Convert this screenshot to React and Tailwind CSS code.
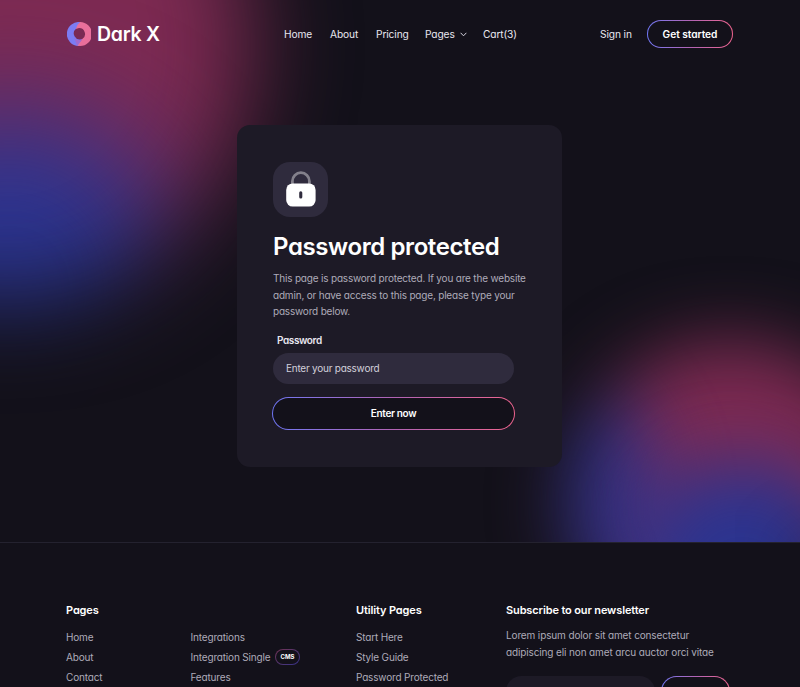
import React from "react";

function Glows() {
  return (
    <svg className="absolute inset-0" width="800" height="542" viewBox="0 0 800 542" aria-hidden="true">
      <defs>
        <filter id="edgeWide" x="-60%" y="-60%" width="220%" height="220%" colorInterpolationFilters="sRGB"><feGaussianBlur stdDeviation="48" /></filter>
        <filter id="hueWide" x="-100%" y="-100%" width="300%" height="300%" colorInterpolationFilters="sRGB"><feGaussianBlur stdDeviation="56" /></filter>
        <filter id="soft" x="-100%" y="-100%" width="300%" height="300%" colorInterpolationFilters="sRGB"><feGaussianBlur stdDeviation="36" /></filter>
        <mask id="leftMask" maskUnits="userSpaceOnUse" x="-400" y="-400" width="1000" height="1000">
          <ellipse cx="6" cy="46" rx="246" ry="256" fill="#fff" filter="url(#edgeWide)" />
        </mask>
        <mask id="rightMask" maskUnits="userSpaceOnUse" x="400" y="200" width="600" height="600">
          <circle cx="730" cy="502" r="162" fill="#fff" filter="url(#soft)" />
        </mask>
      </defs>
      <g mask="url(#leftMask)">
        <rect x="0" y="0" width="450" height="500" fill="#7d2a52" />
        <ellipse cx="10" cy="290" rx="175" ry="180" fill="#2b3490" filter="url(#hueWide)" />
      </g>
      <g mask="url(#rightMask)">
        <rect x="450" y="200" width="350" height="342" fill="#7d2a52" />
        <ellipse cx="575" cy="510" rx="88" ry="135" fill="#2b3490" opacity="0.85" filter="url(#soft)" />
        <ellipse cx="742" cy="568" rx="112" ry="106" fill="#2b3490" filter="url(#soft)" />
        <circle cx="825" cy="570" r="30" fill="#15142a" opacity="0.7" filter="url(#soft)" />
      </g>
    </svg>
  );
}

function Logo() {
  return (
    <div className="flex w-[217px] items-center gap-[6px]">
      <svg width="24" height="24" viewBox="0 0 24 24">
        <path d="M14 0.2A12 12 0 1 0 12 24L15 17A6 6 0 0 1 9 6.8Z" fill="#7b7cf3" />
        <path d="M13 0A12 12 0 0 1 13 24L10.5 23.8L15 17.2A6 6 0 0 0 12 6L8.8 6.9Q10 2.6 13 0Z" fill="#e96f9b" />
        <path d="M10 23.8L15.5 17A6 6 0 0 1 7 15.5Q9 20 10 23.8Z" fill="#a06bd0" />
      </svg>
      <span className="text-[19.5px] leading-6 font-semibold tracking-[-0.28px] whitespace-nowrap text-white">Dark X</span>
    </div>
  );
}

const outline = "bg-gradient-to-r from-[#6f76f5] via-[#b163b4] to-[#f0648f]";

function Header() {
  return (
    <header className="flex h-[68px] items-center pl-[67px] text-[10.2px] tracking-[-0.12px] text-[#e9e7f0]">
      <Logo />
      <nav className="flex items-center pt-px whitespace-nowrap">
        <a className="w-[46px]">Home</a>
        <a className="w-[46px]">About</a>
        <a className="w-[49px]">Pricing</a>
        <a className="flex w-[58px] items-center gap-[5px]">
          Pages
          <svg width="7" height="5" viewBox="0 0 7 5" fill="none" stroke="#d5d3df" strokeWidth="1"><path d="M0.6 0.8L3.5 3.8L6.4 0.8" /></svg>
        </a>
        <a className="w-[117px]">Cart(3)</a>
        <a className="w-[47px]">Sign in</a>
      </nav>
      <div className={"h-[28px] w-[86px] rounded-full p-px " + outline}>
        <button className="flex h-full w-full items-center justify-center rounded-full bg-[#13111a] pt-px text-[10.2px] font-semibold tracking-[-0.05px] whitespace-nowrap text-white">Get started</button>
      </div>
    </header>
  );
}

function Card() {
  return (
    <main className="mt-[56.5px] ml-[237px] h-[342px] w-[325px] rounded-[13px] bg-[#1d1a26] pt-[37px] pl-9">
      <div className="flex size-[55px] items-center justify-center rounded-[17px] bg-[#2f2b3d]">
        <svg width="30" height="36" viewBox="0 0 30 36">
          <path d="M6.4 14V10.2a8.5 8.5 0 0 1 17 0V14" fill="none" stroke="#83808b" strokeWidth="2.8" />
          <rect x="0.2" y="12.5" width="29.4" height="23" rx="6.4" fill="#fff" />
          <rect x="13.2" y="20.3" width="3.1" height="7.2" rx="1.5" fill="#2f2b3d" />
        </svg>
      </div>
      <h1 className="mt-[14px] text-[24px] leading-8 font-semibold tracking-[-0.4px] whitespace-nowrap text-white">Password protected</h1>
      <p className="mt-[7.5px] text-[10px] leading-[16.7px] tracking-[-0.19px] whitespace-nowrap text-[#aeabb9]">
        This page is password protected. If you are the website<br />
        admin, or have access to this page, please type your<br />
        password below.
      </p>
      <label className="mt-[11.4px] ml-1 block text-[10px] leading-4 font-semibold tracking-[-0.4px] text-[#e9e7f0]">Password</label>
      <div className="mt-[5px] flex h-[31px] w-[241px] items-center rounded-full bg-[#2f2b3d] pt-px pl-[13px] text-[10px] tracking-[-0.24px] text-[#d2d0db]">Enter your password</div>
      <div className={"mt-[13px] -ml-px h-[33px] w-[243px] rounded-full p-px " + outline}>
        <button className="flex h-full w-full items-center justify-center rounded-full bg-[#13111a] text-[10px] font-semibold tracking-[-0.34px] text-white">Enter now</button>
      </div>
    </main>
  );
}

function Links({ items }) {
  return (
    <ul className="text-[10px] leading-5 tracking-[-0.17px] whitespace-nowrap text-[#aeabb9]">
      {items.map((item) => (
        <li key={item} className="flex h-5 items-center gap-[4.5px]">
          <span>{item}</span>
          {item === "Integration Single" && (
            <span className="h-4 w-[25px] rounded-full bg-gradient-to-br from-[#713052] to-[#34318a] p-px">
              <span className="flex h-full items-center justify-center rounded-full bg-[#13111a] text-[6px] font-bold tracking-normal text-white">CMS</span>
            </span>
          )}
        </li>
      ))}
    </ul>
  );
}

function Footer() {
  const heading = "text-[11px] leading-4 font-semibold tracking-[-0.13px] whitespace-nowrap text-white";
  return (
    <footer className="flex h-[145px] items-start border-t border-[#24222f] pt-[59px] pl-[66px]">
      <section className="w-[290px]">
        <h2 className={heading}>Pages</h2>
        <div className="mt-[9px] flex">
          <div className="w-[124.5px]"><Links items={["Home", "About", "Contact"]} /></div>
          <Links items={["Integrations", "Integration Single", "Features"]} />
        </div>
      </section>
      <section className="w-[150px]">
        <h2 className={heading}>Utility Pages</h2>
        <div className="mt-[9px]"><Links items={["Start Here", "Style Guide", "Password Protected"]} /></div>
      </section>
      <section>
        <h2 className={heading}>Subscribe to our newsletter</h2>
        <p className="mt-[9px] text-[10px] leading-[16.7px] tracking-[-0.13px] whitespace-nowrap text-[#aeabb9]">Lorem ipsum dolor sit amet consectetur<br />adipiscing eli non amet arcu auctor orci vitae</p>
        <div className="mt-[16px] flex gap-[6px]">
          <div className="h-[31px] w-[149px] rounded-full bg-[#1d1a26]" />
          <div className={"h-[31px] w-[69px] rounded-full p-px " + outline}><div className="h-full rounded-full bg-[#13111a]" /></div>
        </div>
      </section>
    </footer>
  );
}

export default function App() {
  return (
    <div className="relative h-[687px] w-[800px] overflow-hidden bg-[#13111a] font-['Inter',sans-serif] [font-feature-settings:'cv11']">
      <Glows />
      <div className="relative">
        <Header />
        <Card />
        <div className="h-[75.5px]" />
        <Footer />
      </div>
    </div>
  );
}
